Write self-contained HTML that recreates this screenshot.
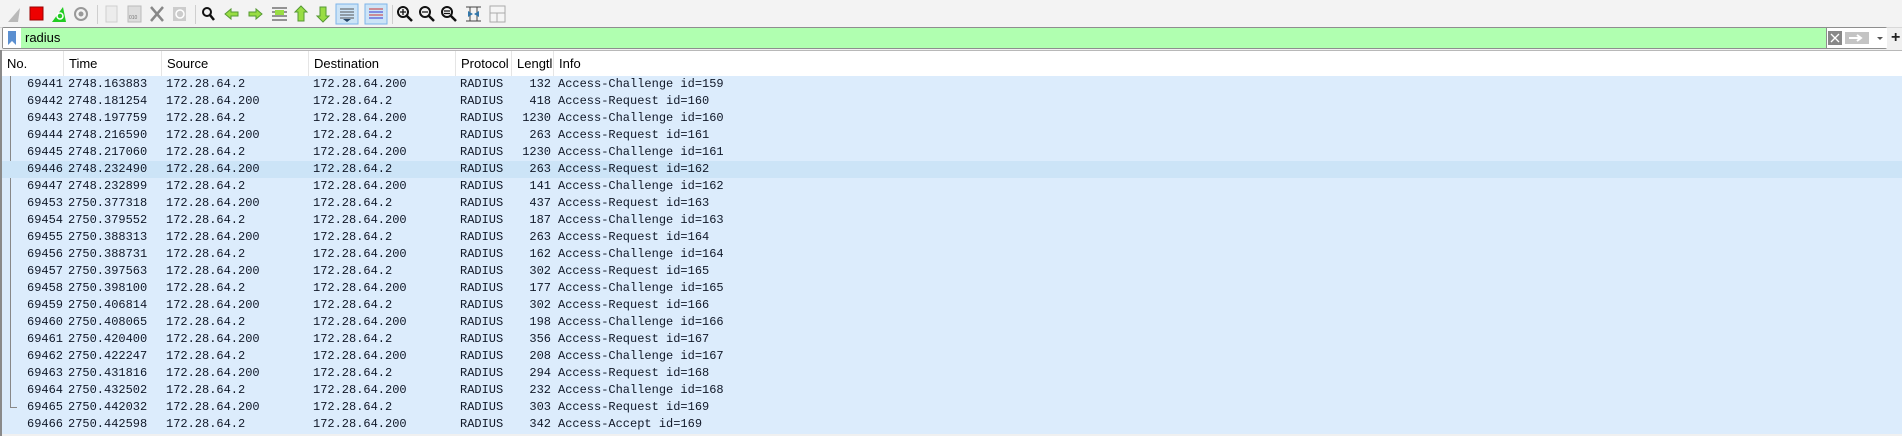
<!DOCTYPE html>
<html><head><meta charset="utf-8"><style>
*{margin:0;padding:0;box-sizing:border-box}
body{width:1902px;height:436px;background:#f0f0f0;position:relative;overflow:hidden;font-family:"Liberation Sans",sans-serif}
.abs{position:absolute}
#tb{left:0;top:0;width:1902px;height:28px;background:#f3f3f3;border-bottom:1px solid #d8d8d8}
.sep{position:absolute;top:5px;width:1px;height:19px;background:#cfcfcf}
#flt{left:2px;top:27px;width:1885px;height:22px;border:1px solid #8e8e8e;background:#b0ffb0;border-radius:2px}
#hdr{left:2px;top:50px;width:1900px;height:26px;background:#fff;border-top:1px solid #b8b8b8}
.hc{position:absolute;top:0;height:26px;line-height:26px;font-size:13px;color:#000;padding-left:5px;border-right:1px solid #e5e5e5}
#rows{left:2px;top:76px;width:1900px;height:358px;background:#dcecfc}
.r{position:absolute;left:0;width:1900px;height:17px;font-family:"Liberation Mono",monospace;font-size:12px;line-height:17px;color:#101828;white-space:pre}
.r span{position:absolute;top:0}
</style></head><body>
<div id="tb" class="abs">
<svg width="560" height="28" style="position:absolute;left:0;top:0">
<path d="M8 22 L20 8 L18 22 Z" fill="#b9b9b9"/>
<rect x="30" y="7" width="13" height="13" fill="#e00"/><rect x="30" y="7" width="13" height="13" fill="none" stroke="#900"/>
<path d="M52 22 L63 7 L66 22 Z" fill="#2c2"/><circle cx="60" cy="16" r="3" fill="none" stroke="#fff" stroke-width="1.5"/>
<circle cx="81" cy="14" r="6" fill="none" stroke="#999" stroke-width="2"/><circle cx="81" cy="14" r="2.5" fill="#999"/>
<rect x="106" y="6" width="11" height="16" fill="#ececec" stroke="#cfcfcf"/>
<rect x="128" y="6" width="13" height="16" fill="#ddd" stroke="#bbb"/><text x="129" y="19" font-size="5" fill="#777">010</text>
<path d="M151 7 L163 21 M163 7 L151 21" stroke="#888" stroke-width="2.5"/>
<rect x="173" y="7" width="13" height="14" fill="#ccc"/><circle cx="180" cy="14" r="4" fill="none" stroke="#fff" stroke-width="1.5"/>
<circle cx="207" cy="12" r="4" fill="none" stroke="#111" stroke-width="2"/><path d="M210 15 L214 20" stroke="#111" stroke-width="2.5"/>
<path d="M225 14 L231 9 V12 H238 V16 H231 V19 Z" fill="#9d4" stroke="#593"/>
<path d="M262 14 L256 9 V12 H249 V16 H256 V19 Z" fill="#9d4" stroke="#593"/>
<path d="M272 8 H287 M272 12 H287 M272 16 H287 M272 20 H287" stroke="#333"/><rect x="275" y="10" width="9" height="5" fill="#9d4"/>
<path d="M301 6 L307 12 H304 V21 H298 V12 H295 Z" fill="#9d4" stroke="#593"/>
<path d="M323 22 L329 16 H326 V7 H320 V16 H317 Z" fill="#9d4" stroke="#593"/>
<rect x="336" y="4" width="22" height="20" fill="#cce4f7" stroke="#7eb4ea"/><path d="M340 9 H354 M340 12 H354 M340 15 H354 M340 18 H354" stroke="#555"/><path d="M343 19 H351 L347 22 Z" fill="#246"/>
<rect x="365" y="4" width="22" height="20" fill="#cce4f7" stroke="#7eb4ea"/><path d="M369 9 H383 M369 12 H383 M369 15 H383 M369 18 H383" stroke="#c33"/><path d="M369 12 H383 M369 18 H383" stroke="#33c"/>
<g stroke="#111" stroke-width="2" fill="none"><circle cx="403" cy="12" r="5"/><circle cx="425" cy="12" r="5"/><circle cx="447" cy="12" r="5"/></g>
<path d="M407 16 L412 21 M429 16 L434 21 M451 16 L456 21" stroke="#111" stroke-width="2.5"/>
<path d="M400 12 H406 M403 9 V15 M422 12 H428 M444 11 H450 M444 13.5 H450" stroke="#111" stroke-width="1.3"/>
<path d="M466 7 H481 M466 21 H481 M470 7 V21 M477 7 V21" stroke="#444"/><path d="M468 11 L473 14 L468 17Z M479 11 L474 14 L479 17Z" fill="#37a"/>
<rect x="490" y="6" width="15" height="16" fill="#f5f5f5" stroke="#aaa"/><path d="M490 13 H505 M497 13 V22" stroke="#aaa"/>
</svg>
<div class="sep" style="left:97px"></div><div class="sep" style="left:195px"></div><div class="sep" style="left:392px"></div>
</div>
<div id="flt" class="abs">
<div class="abs" style="left:0;top:0;width:18px;height:20px;background:#fff"></div>
<svg class="abs" style="left:3px;top:2px" width="12" height="16"><path d="M2 1 H10 V15 L6 11 L2 15 Z" fill="#5b8fd0"/></svg>
<div class="abs" style="left:22px;top:0;height:20px;line-height:20px;font-size:13px;color:#000">radius</div>
<div class="abs" style="left:1823px;top:0;width:61px;height:20px;background:#fff;border-left:1px solid #8e8e8e"></div>
<svg class="abs" style="left:1824px;top:2px" width="60" height="17"><rect x="1" y="1" width="14" height="14" fill="#888"/><path d="M4 4 L12 12 M12 4 L4 12" stroke="#fff" stroke-width="1.3"/><rect x="18" y="2" width="24" height="12" fill="#c4c4c4"/><path d="M22 8 H34 M30 5 L34 8 L30 11" stroke="#fff" stroke-width="2" fill="none"/><path d="M50 7 H56 L53 10Z" fill="#555"/></svg>
</div>
<div class="abs" style="left:1891px;top:29px;font-size:16px;font-weight:bold;color:#222">+</div>
<div id="hdr" class="abs">
<div class="hc" style="left:0;width:62px">No.</div>
<div class="hc" style="left:62px;width:98px">Time</div>
<div class="hc" style="left:160px;width:147px">Source</div>
<div class="hc" style="left:307px;width:147px">Destination</div>
<div class="hc" style="left:454px;width:56px">Protocol</div>
<div class="hc" style="left:510px;width:42px">Lengtl</div>
<div class="hc" style="left:552px;width:1348px;border-right:none">Info</div>
</div>
<div id="rows" class="abs">
<div class="abs" style="left:8px;top:0;width:1px;height:332px;background:#888"></div>
<div class="abs" style="left:8px;top:331px;width:7px;height:1px;background:#888"></div>
<div id="rc"></div>
</div>
<div class="abs" style="left:0;top:50px;width:2px;height:386px;background:#8a8a8a"></div>
<script>
var d=[["69441","2748.163883","172.28.64.2","172.28.64.200","132","Access-Challenge id=159"],
["69442","2748.181254","172.28.64.200","172.28.64.2","418","Access-Request id=160"],
["69443","2748.197759","172.28.64.2","172.28.64.200","1230","Access-Challenge id=160"],
["69444","2748.216590","172.28.64.200","172.28.64.2","263","Access-Request id=161"],
["69445","2748.217060","172.28.64.2","172.28.64.200","1230","Access-Challenge id=161"],
["69446","2748.232490","172.28.64.200","172.28.64.2","263","Access-Request id=162"],
["69447","2748.232899","172.28.64.2","172.28.64.200","141","Access-Challenge id=162"],
["69453","2750.377318","172.28.64.200","172.28.64.2","437","Access-Request id=163"],
["69454","2750.379552","172.28.64.2","172.28.64.200","187","Access-Challenge id=163"],
["69455","2750.388313","172.28.64.200","172.28.64.2","263","Access-Request id=164"],
["69456","2750.388731","172.28.64.2","172.28.64.200","162","Access-Challenge id=164"],
["69457","2750.397563","172.28.64.200","172.28.64.2","302","Access-Request id=165"],
["69458","2750.398100","172.28.64.2","172.28.64.200","177","Access-Challenge id=165"],
["69459","2750.406814","172.28.64.200","172.28.64.2","302","Access-Request id=166"],
["69460","2750.408065","172.28.64.2","172.28.64.200","198","Access-Challenge id=166"],
["69461","2750.420400","172.28.64.200","172.28.64.2","356","Access-Request id=167"],
["69462","2750.422247","172.28.64.2","172.28.64.200","208","Access-Challenge id=167"],
["69463","2750.431816","172.28.64.200","172.28.64.2","294","Access-Request id=168"],
["69464","2750.432502","172.28.64.2","172.28.64.200","232","Access-Challenge id=168"],
["69465","2750.442032","172.28.64.200","172.28.64.2","303","Access-Request id=169"],
["69466","2750.442598","172.28.64.2","172.28.64.200","342","Access-Accept id=169"]];
var h="";d.forEach(function(r,i){h+='<div class="r" style="top:'+(i*17)+'px'+(i==5?';background:#cce4f7':'')+'"><span style="left:25px">'+r[0]+'</span><span style="left:66px">'+r[1]+'</span><span style="left:164px">'+r[2]+'</span><span style="left:311px">'+r[3]+'</span><span style="left:458px">RADIUS</span><span style="right:1351px">'+r[4]+'</span><span style="left:556px">'+r[5]+'</span></div>';});
document.getElementById("rc").innerHTML=h;
</script>
</body></html>
